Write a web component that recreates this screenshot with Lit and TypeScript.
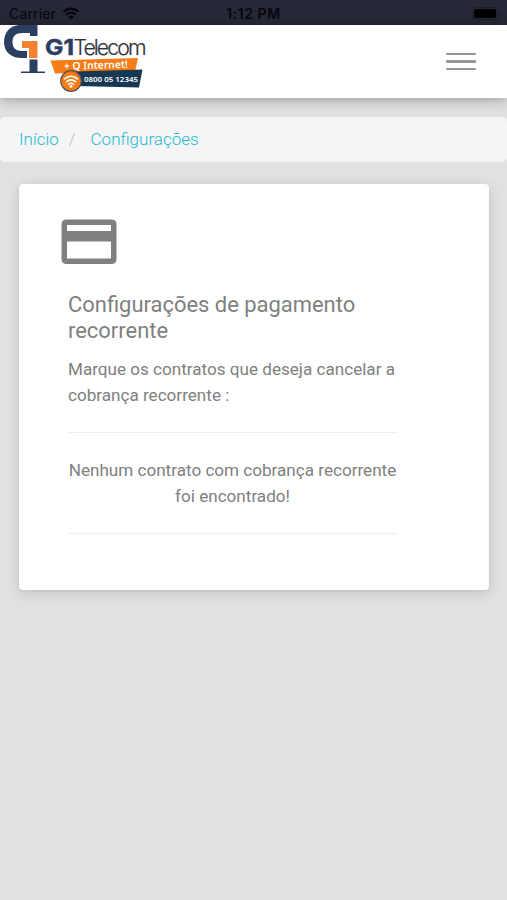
import { LitElement, html, css } from "lit";
import { customElement } from "lit/decorators.js";

@customElement("status-bar")
class StatusBar extends LitElement {
  static styles = css`
    :host { display: grid; grid-template-columns: 1fr auto 1fr; align-items: center; height: 25px; box-sizing: border-box; padding: 2px 6px 0 9px; background: #272837; color: #06060c; font: 14px Inter, sans-serif; }
    .left { display: flex; align-items: center; gap: 6px; }
    .carrier { letter-spacing: 0.15px; }
    .time { margin-right: 3px; font-weight: 600; letter-spacing: 0.55px; }
    .right { display: flex; justify-content: flex-end; }
    svg { display: block; }
  `;
  render() {
    return html`
      <div class="left"><span class="carrier">Carrier</span>
        <svg width="18" height="13" viewBox="0 0 17 13" fill="none" stroke="#06060c" stroke-width="2.3">
          <path d="M1 4.8a10.7 10.7 0 0 1 15 0M3.6 7.7a7 7 0 0 1 9.8 0" /><path d="M8.5 12.6L5.7 9.8a4 4 0 0 1 5.6 0z" fill="#06060c" stroke="none" />
        </svg></div>
      <div class="time">1:12 PM</div>
      <div class="right"><svg width="29" height="13" viewBox="0 0 29 13">
        <rect x=".5" y=".5" width="25" height="12" rx="3.5" fill="none" stroke="#1d1d2a" /><rect x="2" y="2" width="22" height="9" rx="2" fill="#000" /><path d="M27 4.5q1.8 2 0 4z" fill="#1a1a27" />
      </svg></div>`;
  }
}

@customElement("brand-logo")
class BrandLogo extends LitElement {
  static styles = css`
    :host, svg { display: block; }
    .name { font-family: Inter, sans-serif; }
    .tag { font-family: "Noto Sans", sans-serif; font-weight: 600; fill: #fff; }
  `;
  render() {
    return html`<svg width="160" height="73" viewBox="0 25 160 73">
      <path d="M37.5 25H19C9 26 4 33 4 42C4 52 11 58 22 58H27V51H22C16 51 12.5 48 12.5 42C12.5 36 16 33 22 33H30V36H37.5Z" fill="#2c3f61" />
      <path d="M22 41H37.5V58H29V48H22Z" fill="#f58233" />
      <path d="M29.5 59.5H37.5V71.5H45V73H21V71.5H29.5Z" fill="#2c3f61" />
      <text class="name" x="45" y="54.8" font-size="22" font-weight="700" fill="#2c3f61" stroke="#2c3f61" stroke-width=".5" textLength="29" lengthAdjust="spacingAndGlyphs">G1</text>
      <text class="name" x="73.5" y="54.8" font-size="21.3" font-weight="300" fill="#30333b" stroke="#30333b" stroke-width=".2" textLength="73" lengthAdjust="spacing">Telecom</text>
      <path d="M50.5 60.5L138 58L135 71.5L55 73.5Z" fill="#f57c16" />
      <path d="M76 71.5L142.5 69.5L139 87.5L76 86Z" fill="#163853" />
      <text class="tag" x="64" y="69.8" font-size="10.3" textLength="64" lengthAdjust="spacingAndGlyphs" transform="rotate(-1.8 64 70)">+ Q Internet!</text>
      <text class="tag" x="84" y="82.4" font-size="7.9" textLength="54" lengthAdjust="spacingAndGlyphs">0800 05 12345</text>
      <circle cx="71" cy="81" r="10.3" fill="#f57c16" stroke="#57525b" stroke-width="1.2" />
      <g fill="none" stroke="#fff" stroke-width="1.6" stroke-linecap="round"><path d="M64.5 79a9 9 0 0 1 13 0M66.6 81.8a6 6 0 0 1 8.8 0M68.7 84.3a3.2 3.2 0 0 1 4.6 0" /></g>
      <circle cx="71" cy="86.4" r="1.4" fill="#fff" />
    </svg>`;
  }
}

@customElement("app-root")
class AppRoot extends LitElement {
  static styles = css`
    :host { display: block; height: 900px; overflow: hidden; background: #e1e1e1; color: #808080; font-family: Roboto, sans-serif; }
    .header { position: relative; display: flex; justify-content: space-between; align-items: flex-start; height: 73px; background: #fff; box-shadow: 0 2px 12px rgba(0,0,0,.3); }
    .menu { display: flex; flex-direction: column; gap: 5px; width: 30px; margin: 28px 31px 0 0; padding: 0; border: 0; background: none; }
    .bar { height: 2.4px; border-radius: 1px; background: #959595; }
    .crumbs { display: flex; align-items: center; height: 45px; margin-top: 19px; padding: 0 19px 2px; box-sizing: border-box; border-radius: 5px; background: #f5f5f5; font-size: 17px; font-weight: 300; }
    .link { color: #1fbad2; text-decoration: none; }
    .slash { margin: 0 15px 0 10px; color: #bbb; }
    .card { height: 406px; box-sizing: border-box; margin: 22px 18px 0 19px; padding: 28px 92px 0 49px; border-radius: 4px; background: #fff; box-shadow: 0 3px 14px rgba(0,0,0,.13), 0 1px 3px rgba(0,0,0,.06); }
    .icon { display: block; margin-left: -13px; }
    .title { margin: 20px 0 0; font-size: 21.95px; font-weight: 400; line-height: 26px; white-space: nowrap; }
    .text { margin: 12px 0 0; font-size: 17.1px; line-height: 26px; white-space: nowrap; }
    .rule { height: 1px; margin: 24px 0 0; border: 0; background: #eee; }
    .empty { margin-top: 24px; text-align: center; }
  `;
  render() {
    return html`
      <status-bar></status-bar>
      <header class="header"><brand-logo></brand-logo>
        <button class="menu" aria-label="Menu"><span class="bar"></span><span class="bar"></span><span class="bar"></span></button>
      </header>
      <nav class="crumbs"><a class="link">Início</a><span class="slash">/</span><a class="link">Configurações</a></nav>
      <main class="card">
        <svg class="icon" width="66" height="60" viewBox="0 0 66 60"><path fill="#808080" fill-rule="evenodd" d="M11.5 7.5H56.5Q61.5 7.5 61.5 12.5V47Q61.5 52 56.5 52H11.5Q6.5 52 6.5 47V12.5Q6.5 7.5 11.5 7.5ZM12 13V19H56V13ZM12 29.5V46.5H56V29.5Z" /></svg>
        <h1 class="title">Configurações de pagamento<br />recorrente</h1>
        <p class="text">Marque os contratos que deseja cancelar a<br />cobrança recorrente :</p>
        <hr class="rule" />
        <p class="text empty">Nenhum contrato com cobrança recorrente<br />foi encontrado!</p>
        <hr class="rule" />
      </main>`;
  }
}
